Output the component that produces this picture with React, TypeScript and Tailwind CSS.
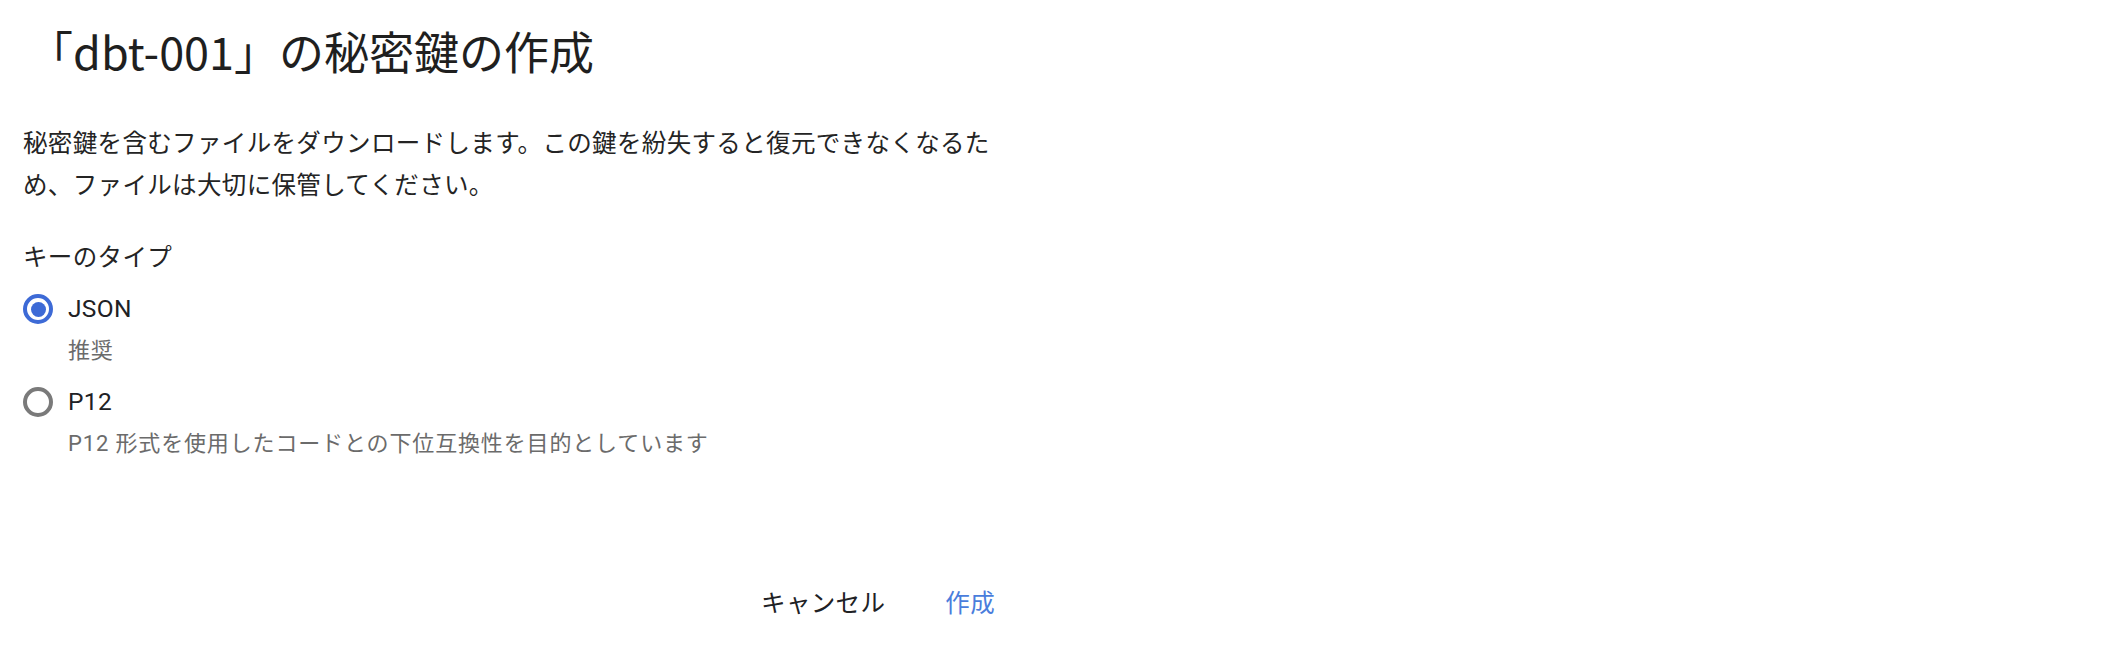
import React from "react";

const body = { fontFamily: 'Roboto, "Noto Sans CJK JP", sans-serif' };
const title = { fontFamily: '"Noto Sans CJK JP", sans-serif' };

function Radio({ checked }: { checked: boolean }) {
  return (
    <div className="flex h-[42px] w-[30px] items-center justify-center">
      <div
        className={
          checked
            ? "flex h-[30px] w-[30px] items-center justify-center rounded-full border-[4px] border-[#3d6ad6]"
            : "flex h-[30px] w-[30px] items-center justify-center rounded-full border-[4px] border-[#7a7a7a]"
        }
      >
        {checked && <div className="h-[15px] w-[15px] rounded-full bg-[#3d6ad6]" />}
      </div>
    </div>
  );
}

export default function App() {
  return (
    <div className="h-[654px] w-[2128px] bg-white" style={body}>
      <div className="flex w-[1023px] flex-col pl-[23px]">
        <h1
          className="pt-[22px] pl-[5px] text-[45px] leading-[58px] font-normal text-[#1f1f1f]"
          style={title}
        >
          「dbt-001」の秘密鍵の作成
        </h1>
        <p className="mt-[43px] text-[24.5px] leading-[42px] tracking-[0.35px] text-[#242424]">
          秘密鍵を含むファイルをダウンロードします。この鍵を紛失すると復元できなくなるた
          <br />
          め、ファイルは大切に保管してください。
        </p>
        <div className="mt-[30px] text-[24.5px] leading-[42px] tracking-[0.35px] text-[#242424]">
          キーのタイプ
        </div>
        <div className="mt-[9px] flex items-center gap-[15px]">
          <Radio checked={true} />
          <span className="text-[24.5px] leading-[42px] tracking-[0.35px] text-[#202124]">JSON</span>
        </div>
        <div className="pl-[45px] text-[22px] leading-[42px] tracking-[0.85px] text-[#6b6b6b]">推奨</div>
        <div className="mt-[9px] flex items-center gap-[15px]">
          <Radio checked={false} />
          <span className="text-[24.5px] leading-[42px] tracking-[0.35px] text-[#202124]">P12</span>
        </div>
        <div className="pl-[45px] text-[22px] leading-[42px] tracking-[0.85px] text-[#6b6b6b]">
          P12 形式を使用したコードとの下位互換性を目的としています
        </div>
        <div className="mt-[108px] flex justify-end gap-[4px]">
          <button className="h-[63px] px-[28px] text-[24.5px] tracking-[0.35px] text-[#202124]">
            キャンセル
          </button>
          <button className="h-[63px] px-[28px] text-[24.5px] tracking-[0.35px] text-[#4a7ddc]">
            作成
          </button>
        </div>
      </div>
    </div>
  );
}
